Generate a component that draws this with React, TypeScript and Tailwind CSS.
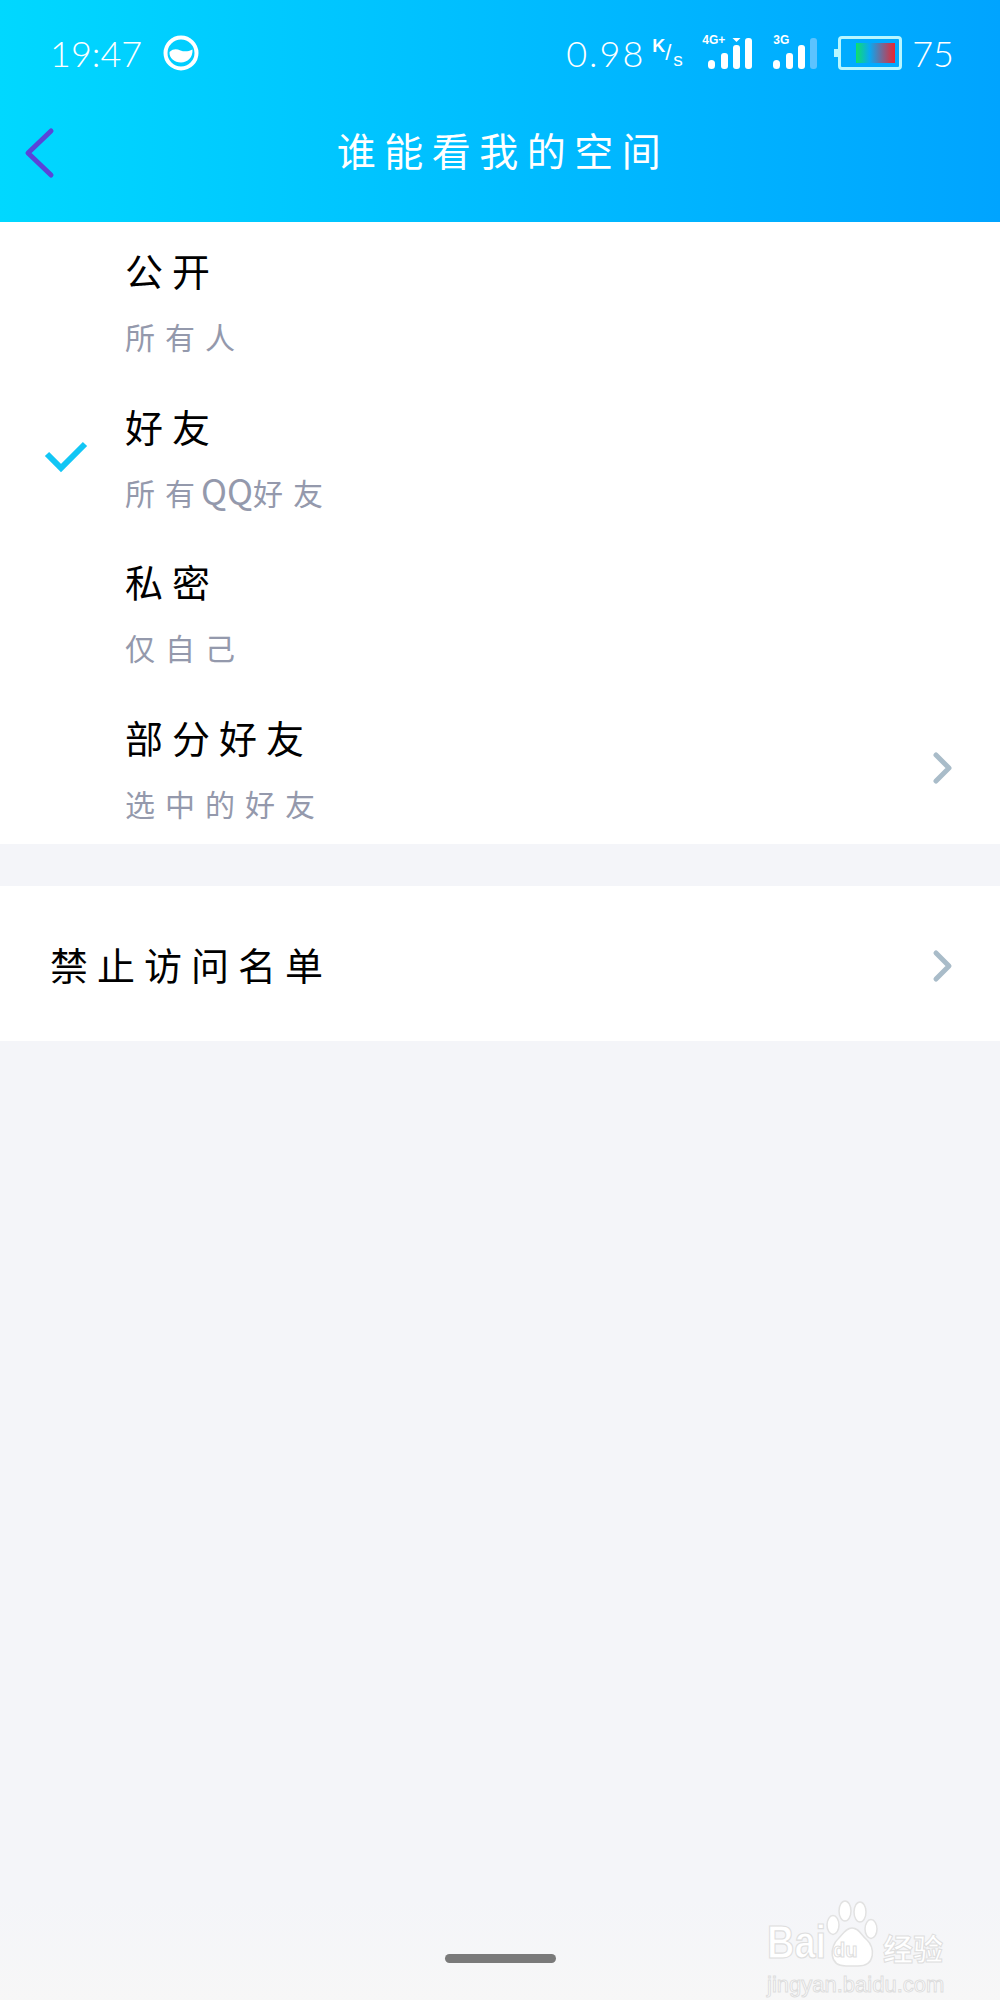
const cjk = "font-['Noto_Sans_CJK_SC',sans-serif]";

const options = [
  { title: '公开', sub: '所有人' },
  { title: '好友', sub: '所有QQ好友', checked: true },
  { title: '私密', sub: '仅自己' },
  { title: '部分好友', sub: '选中的好友', arrow: true },
];

const Signal = ({ last = 'white', triangle = false }: { last?: string; triangle?: boolean }) => (
  <svg width="44" height="33" viewBox="0 0 44 33" className="block">
    <rect x="0" y="22" width="7" height="9" rx="3.5" fill="#fff" />
    <rect x="13" y="15" width="7" height="16" rx="3" fill="#fff" />
    <rect x="25" y="7" width="7" height="24" rx="3" fill="#fff" />
    {triangle && <path d="M24.5 0h8l-4 4z" fill="#fff" />}
    <rect x="37" y="0" width="7" height="31" rx="3" fill={last} />
  </svg>
);

const Battery = () => (
  <svg width="68" height="34" viewBox="0 0 68 34" className="block">
    <defs>
      <linearGradient id="cell" x1="0" x2="1" y1="0" y2="0">
        <stop offset="0" stopColor="#0fe06a" />
        <stop offset="0.35" stopColor="#0aa8f2" />
        <stop offset="1" stopColor="#ea2430" />
      </linearGradient>
    </defs>
    <rect x="0" y="13" width="5" height="8" fill="#b8f6ff" />
    <rect x="5.5" y="1.5" width="61" height="31" rx="2.5" fill="none" stroke="#b8f6ff" strokeWidth="3" />
    <rect x="22" y="7" width="39" height="20" fill="url(#cell)" />
  </svg>
);

const Chevron = () => (
  <svg width="22" height="34" viewBox="0 0 22 34" className="block shrink-0">
    <path d="M4 4l13 13L4 30" fill="none" stroke="#a9bcc9" strokeWidth="5" strokeLinecap="round" strokeLinejoin="round" />
  </svg>
);

const OptionRow = ({ title, sub, checked, arrow }: { title: string; sub: string; checked?: boolean; arrow?: boolean }) => (
  <div className="flex h-[155.5px] items-center">
    <div className="flex h-full w-[125px] shrink-0 items-center pl-[44px] pt-[4px]">
      {checked && (
        <svg width="44" height="34" viewBox="0 0 44 34" className="block">
          <path d="M3 14l14 14L41 4" fill="none" stroke="#12c6f5" strokeWidth="6" />
        </svg>
      )}
    </div>
    <div className="h-full flex-1 pt-[23px]">
      <div className="h-[50px] text-[38px] leading-[50px] tracking-[9px] text-black">{title}</div>
      <div className="mt-[21px] h-[40px] text-[30px] leading-[40px] tracking-[10px] text-[#9499ac]">
        {sub.split(/(QQ)/).map((part) =>
          part === 'QQ' ? (
            <span key={part} className="-ml-[4px] text-[35px] leading-none tracking-normal">{part}</span>
          ) : (
            <span key={part}>{part}</span>
          ),
        )}
      </div>
    </div>
    {arrow && <div className="pr-[46px] pt-[4px]"><Chevron /></div>}
  </div>
);

const Watermark = () => (
  <div className="absolute left-[767px] top-[1900px] h-[100px] w-[190px] text-white [-webkit-text-stroke:1px_#dedede]">
    <svg width="56" height="70" viewBox="0 0 56 70" className="absolute left-[58px] top-0">
      <g fill="#fff" stroke="#e2e2e2" strokeWidth="1.5">
        <ellipse cx="8" cy="25" rx="6" ry="9.5" />
        <ellipse cx="20" cy="11" rx="6" ry="10" />
        <ellipse cx="35" cy="12" rx="6" ry="10" />
        <ellipse cx="46" cy="29" rx="6" ry="9.5" />
        <path d="M27 28c-6 0-9 6-14 11-8 7-10 27 8 27h12c18 0 17-19 9-26-6-5-8-12-15-12z" />
      </g>
    </svg>
    <span className="absolute left-0 top-[25px] origin-bottom scale-y-[1.2] font-['Liberation_Sans',sans-serif] text-[38px] font-bold leading-[44px]">Bai</span>
    <span className="absolute left-[66px] top-[38px] font-['Liberation_Sans',sans-serif] text-[20px] font-bold leading-[24px]">du</span>
    <span className={`absolute left-[116px] top-[27px] text-[30px] font-bold leading-[40px] ${cjk}`}>经验</span>
    <span className="absolute left-0 top-[71px] font-['Liberation_Sans',sans-serif] text-[22px] leading-[28px]">jingyan.baidu.com</span>
  </div>
);

export default function App() {
  return (
    <div className={`relative flex h-[2000px] w-[1000px] flex-col overflow-hidden bg-[#f4f5f9] ${cjk}`}>
      {/* Header */}
      <header className="h-[222px] shrink-0 bg-gradient-to-r from-[#00d8ff] via-[#00bdff] to-[#00a4ff] text-white">
        <div className="flex h-[105px] items-center justify-between pl-[50px] pr-[46px]">
          <div className="flex items-center gap-[14px]">
            <span className="w-[98px] font-['Lato',sans-serif] text-[36px] font-light">19:47</span>
            <svg width="38" height="38" viewBox="0 0 38 38" className="block">
              <circle cx="19" cy="19" r="15.5" fill="none" stroke="#fff" strokeWidth="4" />
              <path d="M7.5 18c4-3.5 7-3 11-1.5 4 1.5 8 1 12-1 .5 8-5 13-11.5 13S7 24 7.5 18z" fill="#fff" />
            </svg>
          </div>
          <div className="flex items-center">
            <span className="w-[78px] font-['Lato',sans-serif] text-[36px] font-light tracking-[2px]">0.98</span>
            <span className="relative ml-[8px] h-[32px] w-[34px] font-['Liberation_Sans',sans-serif] font-bold leading-none">
              <span className="absolute left-0 top-0 text-[18px]">K</span>
              <span className="absolute left-[13px] top-[5px] text-[22px] font-normal">/</span>
              <span className="absolute left-[21px] top-[13px] text-[19px] font-normal">s</span>
            </span>
            <div className="relative ml-[22px] pt-[4px]">
              <span className="absolute left-[-6px] top-0 font-['Liberation_Sans',sans-serif] text-[12px] font-bold leading-[12px]">4G+</span>
              <Signal triangle />
            </div>
            <div className="relative ml-[21px] pt-[4px]">
              <span className="absolute left-0 top-0 font-['Liberation_Sans',sans-serif] text-[12px] font-bold leading-[12px]">3G</span>
              <Signal last="#5cc3ff" />
            </div>
            <div className="ml-[17px]"><Battery /></div>
            <span className="ml-[10px] font-['Lato',sans-serif] text-[36px] font-light">75</span>
          </div>
        </div>
        <div className="relative flex h-[95px] items-start justify-center">
          <svg width="32" height="52" viewBox="0 0 32 52" className="absolute left-[24px] top-[22px]">
            <path d="M27 4L4 26l23 22" fill="none" stroke="#5a45d8" strokeWidth="5" strokeLinecap="round" strokeLinejoin="round" />
          </svg>
          <span className="pl-[6px] pt-[19px] text-[39px] leading-[50px] tracking-[8.5px]">谁能看我的空间</span>
        </div>
      </header>

      {/* Privacy options */}
      <section className="bg-white">
        {options.map((o) => (
          <OptionRow key={o.title} {...o} />
        ))}
      </section>

      <section className="mt-[42px] flex h-[155px] items-center justify-between bg-white pl-[50px] pr-[46px]">
        <span className="text-[38px] tracking-[9px] text-black">禁止访问名单</span>
        <div className="pt-[4px]"><Chevron /></div>
      </section>

      {/* Nav bar zone */}
      <div className="mt-auto flex h-[100px] items-start justify-center bg-gradient-to-b from-[#f4f5f9] to-[#f7f7f7] pt-[54px]">
        <div className="h-[9px] w-[111px] rounded-full bg-[#7a7a7a]" />
      </div>

      <Watermark />
    </div>
  );
}
